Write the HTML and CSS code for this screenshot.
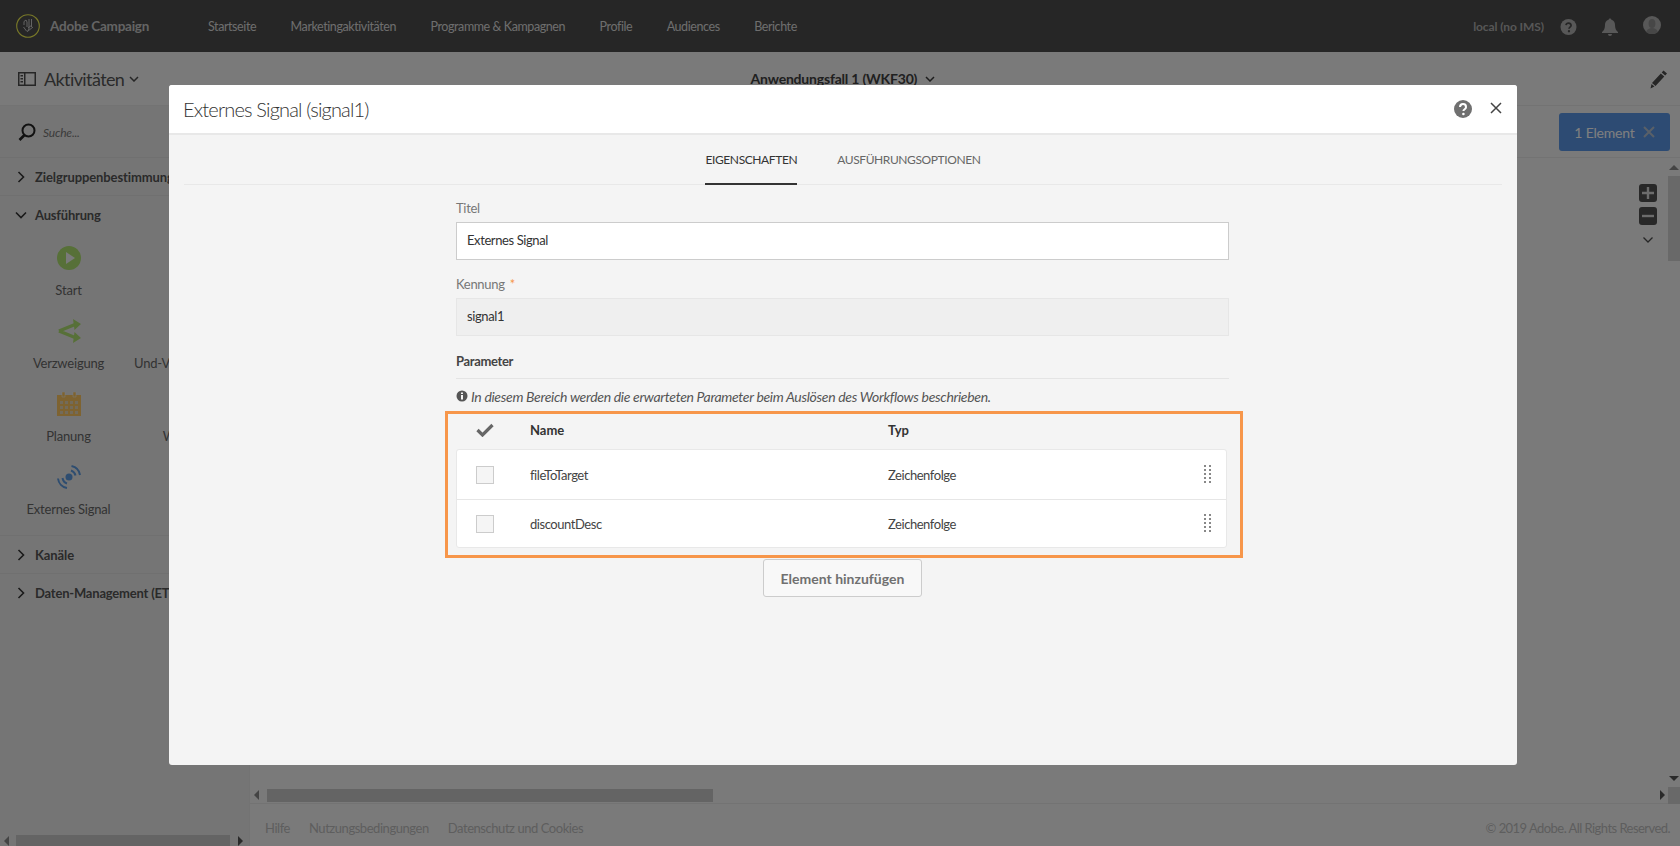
FILE: index.html
```html
<!DOCTYPE html>
<html lang="de">
<head>
<meta charset="utf-8">
<title>Adobe Campaign</title>
<link rel="stylesheet" href="styles.css">
</head>
<body>
<div class="app">
  <header class="topbar">
    <div class="brand">
      <svg class="logo" viewBox="0 0 24 24" fill="none"><circle cx="12" cy="12" r="11.300" stroke="#f0f050" stroke-width="1.100"/><path d="M8 11V7.500l2-1.500 1 2v5M13 5v10l-2 3M15.500 5v8M7.500 13l3 4M12 17l5-4M12 14l4-3" stroke="#c8c8c8" stroke-width="1"/></svg>
      <span class="brand-name">Adobe Campaign</span>
    </div>
    <nav class="nav">
      <a>Startseite</a><a>Marketingaktivitäten</a><a>Programme &amp; Kampagnen</a><a>Profile</a><a>Audiences</a><a>Berichte</a>
    </nav>
    <div class="userbox">
      <span class="instance">local (no IMS)</span>
      <svg class="top-help" viewBox="0 0 18 18"><circle cx="9" cy="9" r="8.500" fill="#b0b0b0"/><path d="M6.300 7a2.800 2.800 0 0 1 5.500.2c0 1.800-2.300 1.900-2.300 3.600" fill="none" stroke="#4c4c4c" stroke-width="1.800"/><circle cx="9.500" cy="13.500" r="1.200" fill="#4c4c4c"/></svg>
      <svg class="top-bell" viewBox="0 0 16 18"><path d="M8 0.500c.9 0 1.300.6 1.400 1.300C12 2.500 13 4.500 13 7c0 3.500 1 5.500 3 7v1H0v-1c2-1.500 3-3.500 3-7 0-2.500 1-4.500 3.600-5.200C6.700 1.100 7.100.5 8 .5zM6 16h4a2 2 0 0 1-4 0z" fill="#b0b0b0"/></svg>
      <svg class="top-avatar" viewBox="0 0 18 18"><circle cx="9" cy="9" r="9" fill="#b0b0b0"/><ellipse cx="9" cy="7.500" rx="3.400" ry="4.500" fill="#8e8e8e"/><path d="M3 16c1-3 3.500-4 6-4s5 1 6 4a9 9 0 0 1-12 0z" fill="#8e8e8e"/></svg>
    </div>
  </header>

  <div class="toolbar">
    <div class="tool-left">
      <svg class="panel-icon" viewBox="0 0 18 14"><path d="M0 0h18v14H0zM1.500 1.500v11H6v-11zM7.500 1.500v11h9v-11z" fill="#4c4c4c" fill-rule="evenodd"/><path d="M2.500 3h2.500v1.500H2.500zM2.500 6h2.500v1.500H2.500zM2.500 9h2.500v1.500H2.500z" fill="#4c4c4c"/></svg>
      <span class="tool-title">Aktivitäten</span>
      <svg class="chev" viewBox="0 0 10 6"><path d="M1 1l4 4 4-4" fill="none" stroke="#4c4c4c" stroke-width="1.500"/></svg>
    </div>
    <div class="wf-title">Anwendungsfall 1 (WKF30)
      <svg class="chev" viewBox="0 0 10 6"><path d="M1 1l4 4 4-4" fill="none" stroke="#3c3c3c" stroke-width="1.500"/></svg>
    </div>
    <div class="tool-right">
      <svg class="pencil" viewBox="0 0 18 20"><path d="M13.500 1.500l3.500 3-1.800 2-3.500-3zM10.800 4.500l3.500 3L5.500 17l-3.500-3zM1.500 15l3 2.500L.5 19.500z" fill="#4c4c4c"/></svg>
    </div>
  </div>

  <div class="workspace">
    <aside class="sidebar">
      <div class="search">
        <svg class="search-icon" viewBox="0 0 18 19"><circle cx="10.500" cy="7.500" r="6" fill="none" stroke="#222" stroke-width="2"/><path d="M6.500 12l-5 5" stroke="#222" stroke-width="2.600"/></svg>
        <span class="search-text">Suche...</span>
      </div>
      <div class="group"><svg class="caret" viewBox="0 0 8 12"><path d="M1.500 1l5 5-5 5" fill="none" stroke="#333" stroke-width="1.600"/></svg>Zielgruppenbestimmung</div>
      <div class="group-open">
        <div class="group-head"><svg class="caret-down" viewBox="0 0 12 8"><path d="M1 1.500l5 5 5-5" fill="none" stroke="#333" stroke-width="1.600"/></svg>Ausführung</div>
        <div class="activities">
          <div class="activity">
            <svg class="act-icon" viewBox="0 0 24 24"><circle cx="12" cy="12" r="12" fill="#aee070"/><path d="M9 6l9 6-9 6z" fill="#f5f5f5"/></svg>
            <span>Start</span>
          </div>
          <div class="activity"></div>
          <div class="activity">
            <svg class="act-icon" viewBox="0 0 24 24"><path d="M2 12l16-6.500M2 12l16 6.500" fill="none" stroke="#aee070" stroke-width="3.400"/><path d="M16 0l8 5-6.500 6zM16 24l8-5-6.500-6z" fill="#aee070"/></svg>
            <span>Verzweigung</span>
          </div>
          <div class="activity"><i class="act-slot"></i><span>Und-Verknüpfung</span></div>
          <div class="activity">
            <svg class="act-icon" viewBox="0 0 24 24"><path d="M0 3h24v21H0z" fill="#fcc662"/><path d="M5 0h3v5H5zM16 0h3v5h-3z" fill="#fcc662" stroke="#f5f5f5" stroke-width=".5"/><path d="M3 9h3v3H3zM8 9h3v3H8zM13 9h3v3h-3zM18 9h3v3h-3zM3 14h3v3H3zM8 14h3v3H8zM13 14h3v3h-3zM18 14h3v3h-3zM3 19h3v3H3zM8 19h3v3H8zM13 19h3v3h-3zM18 19h3v3h-3z" fill="#e6d6b4"/></svg>
            <span>Planung</span>
          </div>
          <div class="activity"><i class="act-slot"></i><span>Warten</span></div>
          <div class="activity">
            <svg class="act-icon" viewBox="0 0 24 24" fill="none" stroke="#5c9ae0" stroke-width="2"><circle cx="12" cy="12" r="3.500" fill="#5c9ae0" stroke="none"/><path d="M14 5.500a7 7 0 0 1 4.500 5M14.500 1a11 11 0 0 1 8.500 9M5.500 13a7 7 0 0 0 4.500 5.500M1 13.500a11 11 0 0 0 9 9.500"/></svg>
            <span>Externes Signal</span>
          </div>
        </div>
      </div>
      <div class="group"><svg class="caret" viewBox="0 0 8 12"><path d="M1.500 1l5 5-5 5" fill="none" stroke="#333" stroke-width="1.600"/></svg>Kanäle</div>
      <div class="group group-last"><svg class="caret" viewBox="0 0 8 12"><path d="M1.500 1l5 5-5 5" fill="none" stroke="#333" stroke-width="1.600"/></svg>Daten-Management (ETL)</div>
      <div class="side-fill"></div>
      <div class="side-scroll">
        <i class="arrow-left"></i><i class="side-thumb"></i><i class="arrow-right"></i>
      </div>
    </aside>

    <main class="main">
      <div class="subbar">
        <button class="elem-btn">1 Element <svg class="elem-x" viewBox="0 0 12 12"><path d="M1 1l10 10M11 1L1 11" stroke="#b4c0d0" stroke-width="2"/></svg></button>
      </div>
      <div class="canvas-wrap">
        <div class="canvas">
          <div class="zoomer">
            <svg class="zoom-btn" viewBox="0 0 18 18"><rect width="18" height="18" rx="3" fill="#505050"/><path d="M9 3v12M3 9h12" stroke="#d8d8d8" stroke-width="2.400"/></svg>
            <svg class="zoom-btn" viewBox="0 0 18 18"><rect width="18" height="18" rx="3" fill="#505050"/><path d="M3 9h12" stroke="#d8d8d8" stroke-width="2.400"/></svg>
            <svg class="zoom-chev" viewBox="0 0 10 6"><path d="M.5.500l4.500 4.500L9.500.500" fill="none" stroke="#4c4c4c" stroke-width="1.300"/></svg>
          </div>
        </div>
        <div class="vscroll"><i class="arrow-up"></i><i class="v-thumb"></i><i class="arrow-down"></i></div>
      </div>
      <div class="hscroll"><i class="arrow-left"></i><i class="h-thumb"></i><i class="arrow-right"></i><i class="corner"></i></div>
      <footer class="footer">
        <a>Hilfe</a><a>Nutzungsbedingungen</a><a>Datenschutz und Cookies</a>
        <span class="copy">© 2019 Adobe. All Rights Reserved.</span>
      </footer>
    </main>
  </div>
</div>

<div class="scrim"></div>

<section class="modal">
  <div class="modal-head">
    <h1 class="modal-title">Externes Signal (signal1)</h1>
    <svg class="modal-help" viewBox="0 0 18 18"><circle cx="9" cy="9" r="9" fill="#707070"/><path d="M6 7a3 3 0 0 1 6 .2C12 9.200 9.400 9.200 9.400 11" fill="none" stroke="#fff" stroke-width="2"/><circle cx="9.400" cy="14" r="1.300" fill="#fff"/></svg>
    <svg class="modal-close" viewBox="0 0 12 12"><path d="M1 1l10 10M11 1L1 11" stroke="#444" stroke-width="1.500"/></svg>
  </div>
  <div class="tabs">
    <a class="tab tab-active">Eigenschaften</a>
    <a class="tab">Ausführungsoptionen</a>
  </div>
  <div class="form">
    <label class="field-label">Titel</label>
    <div class="input">Externes Signal</div>
    <label class="field-label field-gap">Kennung <em class="req">*</em></label>
    <div class="input input-off">signal1</div>
    <div class="section-title">Parameter</div>
    <p class="info"><svg class="info-icon" viewBox="0 0 12 12"><circle cx="6" cy="6" r="5.500" fill="#555"/><path d="M5 2.500h2v1.500H5zM5 5h2v4.500H5z" fill="#f4f4f4"/></svg>In diesem Bereich werden die erwarteten Parameter beim Auslösen des Workflows beschrieben.</p>
    <div class="highlight">
      <div class="thead">
        <svg class="check" viewBox="0 0 18 14"><path d="M1.500 7l5 5L16.500 2" fill="none" stroke="#666" stroke-width="3.200"/></svg>
        <span>Name</span>
        <span>Typ</span>
      </div>
      <div class="table">
        <div class="row">
          <i class="box"></i><span>fileToTarget</span><span>Zeichenfolge</span><i class="grip"></i>
        </div>
        <div class="row">
          <i class="box"></i><span>discountDesc</span><span>Zeichenfolge</span><i class="grip"></i>
        </div>
      </div>
    </div>
    <button class="add-btn">Element hinzufügen</button>
  </div>
</section>
</body>
</html>
```
FILE: styles.css
```css
* { box-sizing: border-box; }
html, body { margin: 0; height: 100%; overflow: hidden; }
body { font-family: Lato, "Open Sans", sans-serif; font-size: 13px; color: #666; background: #f5f5f5; }
i { display: block; font-style: normal; }

.app { height: 846px; display: flex; flex-direction: column; }

/* top bar */
.topbar { height: 52px; flex: none; background: #4c4c4c; display: flex; align-items: center; padding-left: 16px; color: #dcdcdc; }
.brand { display: flex; align-items: center; width: 192px; }
.logo { width: 24px; height: 24px; margin-right: 10px; }
.brand-name { font-weight: 700; font-size: 13.500px; color: #c8c8c8; letter-spacing: -.25px; }
.nav { display: flex; gap: 34.500px; color: #dcdcdc; font-size: 12.500px; letter-spacing: -.42px; }
.userbox { margin-left: auto; display: flex; align-items: center; padding-right: 19px; }
.instance { font-size: 12px; font-weight: 700; color: #aeaeae; margin-right: 16px; letter-spacing: -.1px; }
.top-help { width: 17px; height: 18px; margin-right: 25px; margin-top: 2px; }
.top-bell { width: 16px; height: 18px; margin-right: 25px; margin-top: 2px; }
.top-avatar { width: 18px; height: 18px; margin-top: -3px; }

/* toolbar */
.toolbar { height: 54px; flex: none; display: grid; grid-template-columns: 1fr auto 1fr; align-items: center; padding: 0 12px 0 18px; border-bottom: 1px solid #e6e6e6; }
.tool-left { display: flex; align-items: center; color: #555; }
.panel-icon { width: 18px; height: 14px; margin-right: 8px; }
.tool-title { font-size: 18px; color: #555; letter-spacing: -.6px; }
.chev { width: 10px; height: 6px; margin-left: 5px; vertical-align: 2px; }
.wf-title { font-size: 14px; font-weight: 700; color: #404040; letter-spacing: -.2px; }
.tool-right { display: flex; justify-content: flex-end; }
.pencil { width: 18px; height: 20px; }

/* workspace */
.workspace { flex: 1; min-height: 0; display: flex; }
.sidebar { width: 250px; flex: none; background: #ebebeb; border-right: 1px solid #e6e6e6; display: flex; flex-direction: column; overflow: hidden; }
.search { height: 52px; flex: none; display: flex; align-items: center; padding: 1px 0 0 18px; border-bottom: 1px solid #e0e0e0; }
.search-icon { width: 18px; height: 19px; margin-right: 7px; }
.search-text { font-style: italic; font-size: 12px; color: #777; letter-spacing: -.2px; }
.group { height: 38px; flex: none; display: flex; align-items: center; padding-left: 17px; font-weight: 700; font-size: 13px; color: #555; border-bottom: 1px solid #e0e0e0; white-space: nowrap; letter-spacing: -.1px; }
.group-last { border-bottom: 0; letter-spacing: -.2px; }
.caret { width: 8px; height: 12px; margin-right: 10px; }
.caret-down { width: 12px; height: 8px; margin-right: 8px; margin-left: -1px; }
.group-open { height: 340px; flex: none; border-bottom: 1px solid #e0e0e0; }
.group-head { height: 38px; display: flex; align-items: center; padding-left: 16px; font-weight: 700; font-size: 13px; color: #555; letter-spacing: -.2px; }
.activities { display: grid; grid-template-columns: 115px 115px; grid-auto-rows: 63px; row-gap: 10px; padding: 12px 0 0 11px; }
.activity { display: flex; flex-direction: column; align-items: center; gap: 8px; font-size: 13px; color: #666; white-space: nowrap; line-height: 24px; letter-spacing: -.2px; }
.act-icon, .act-slot { width: 24px; height: 24px; flex: none; }
.side-fill { flex: 1; }
.side-scroll { height: 11px; flex: none; display: flex; align-items: center; padding-left: 4px; }
.side-thumb { width: 214px; height: 11px; background: #c8c8c8; margin: 0 8px 0 7px; }

/* scrollbar arrows */
.arrow-left { width: 0; height: 0; border: 5px solid transparent; border-left-width: 0; border-right-color: #888; }
.arrow-right { width: 0; height: 0; border: 5px solid transparent; border-right-width: 0; border-left-color: #555; }
.arrow-up { width: 0; height: 0; border: 5px solid transparent; border-top-width: 0; border-bottom-color: #888; }
.arrow-down { width: 0; height: 0; border: 5px solid transparent; border-bottom-width: 0; border-top-color: #555; margin-top: auto; margin-bottom: 6px; }

/* main */
.main { flex: 1; min-width: 0; display: flex; flex-direction: column; }
.subbar { height: 52px; flex: none; display: flex; align-items: center; justify-content: flex-end; padding-right: 10px; border-bottom: 1px solid #e6e6e6; }
.elem-btn { width: 111px; height: 38px; border: 0; border-radius: 3px; background: #5a96e6; color: #ffffff; font: 400 14px Lato, sans-serif; letter-spacing: -.2px; display: flex; align-items: center; justify-content: center; gap: 8px; padding: 1px 0 0; }
.elem-x { width: 12px; height: 12px; }
.canvas-wrap { flex: 1; min-height: 0; display: flex; }
.canvas { flex: 1; display: flex; justify-content: flex-end; padding: 26px 11px 0 0; }
.zoomer { display: flex; flex-direction: column; align-items: center; gap: 5px; }
.zoom-btn { width: 18px; height: 18px; }
.zoom-chev { width: 10px; height: 6px; margin-top: 7px; }
.vscroll { width: 12px; flex: none; display: flex; flex-direction: column; align-items: center; padding-top: 7px; }
.v-thumb { width: 12px; height: 85px; margin-top: 6px; background: #d2d2d2; }
.hscroll { height: 17px; flex: none; display: flex; align-items: center; padding-left: 4px; border-bottom: 1px solid #e6e6e6; }
.h-thumb { width: 446px; height: 13px; background: #c8c8c8; margin: 0 auto 0 8px; }
.hscroll .arrow-right { margin-right: 3px; }
.corner { width: 12px; height: 17px; background: #d2d2d2; }
.footer { height: 42px; flex: none; display: flex; align-items: center; gap: 19px; padding: 6px 10px 0 15px; font-size: 13px; color: #bcbcbc; letter-spacing: -.45px; }
.copy { margin-left: auto; font-size: 13px; letter-spacing: -.55px; }

/* scrim + modal */
.scrim { position: absolute; inset: 0; background: rgba(0, 0, 0, .5); }
.modal { position: absolute; left: 169px; top: 85px; width: 1348px; height: 680px; background: #f4f4f4; border-radius: 3px; overflow: hidden; display: flex; flex-direction: column; }
.modal-head { height: 50px; flex: none; background: #fff; border-bottom: 2px solid #e8e8e8; display: flex; align-items: center; padding: 0 15px 0 14px; }
.modal-title { margin: 0; font-size: 20px; font-weight: 300; color: #333; flex: 1; letter-spacing: -.82px; }
.modal-help { width: 18px; height: 18px; margin-right: 18px; margin-top: -1px; }
.modal-close { width: 12px; height: 12px; margin-top: -3px; }
.tabs { height: 50px; flex: none; margin: 0 15px; display: flex; justify-content: center; gap: 40px; border-bottom: 1px solid #e8e8e8; }
.tab { height: 50px; line-height: 49px; font-size: 12px; text-transform: uppercase; color: #666; letter-spacing: -.4px; }
.tab-active { color: #333; border-bottom: 2px solid #333; }
.form { width: 773px; margin-left: 287px; padding-top: 15px; display: flex; flex-direction: column; flex: 1; }
.field-label { height: 16px; line-height: 16px; font-size: 13px; color: #777; letter-spacing: -.3px; }
.field-gap { margin-top: 16px; }
.req { color: #f7964a; font-style: normal; margin-left: 2px; }
.input { height: 38px; margin-top: 6px; background: #fff; border: 1px solid #ccc; font-size: 13px; color: #333; line-height: 35px; padding-left: 10px; letter-spacing: -.4px; }
.input-off { background: #efefef; border-color: #e6e6e6; }
.section-title { margin-top: 17px; height: 26px; line-height: 16px; font-weight: 700; font-size: 13px; color: #444; border-bottom: 1px solid #e4e4e4; letter-spacing: -.35px; }
.info { margin: 10px 0 0; height: 22px; line-height: 16px; font-size: 14px; font-style: italic; color: #555; display: flex; align-items: flex-start; letter-spacing: -.32px; white-space: nowrap; }
.info-icon { width: 12px; height: 12px; margin: 1px 3px 0 0; }
.highlight { margin: 0 -14px 0 -11px; height: 147px; border: 3px solid #f7964a; padding: 0 13px 0 8px; }
.thead { height: 35px; padding-bottom: 3px; display: grid; grid-template-columns: 74px 358px 1fr; align-items: center; font-weight: 700; font-size: 13px; color: #333; }
.check { width: 18px; height: 14px; margin-left: 20px; }
.table { height: 99px; background: #fff; border: 1px solid #e8e8e8; border-radius: 3px; }
.row { height: 49px; display: grid; grid-template-columns: 73px 358px 1fr 7px; align-items: center; font-size: 13px; color: #444; padding-right: 15px; letter-spacing: -.45px; }
.row + .row { border-top: 1px solid #e6e6e6; height: 48px; }
.box { width: 18px; height: 18px; margin-left: 19px; background: #f5f5f5; border: 1px solid #ccc; }
.grip { width: 7px; height: 18px; border-left: 2px dotted #888; border-right: 2px dotted #888; margin-top: -2px; }
.add-btn { width: 159px; height: 38px; margin: 1px auto 0; background: #f8f8f8; border: 1px solid #ccc; border-radius: 3px; font: 700 14px Lato, sans-serif; color: #707070; padding: 0; }
```
